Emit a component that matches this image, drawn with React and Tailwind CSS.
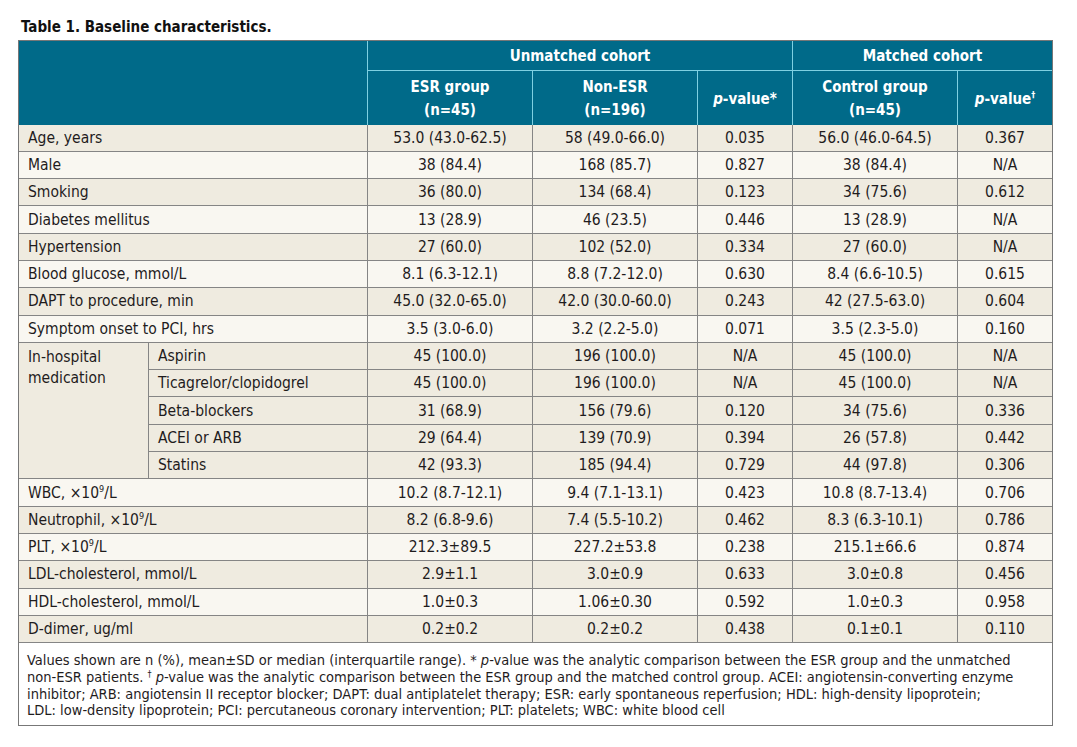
import React from "react";

const rowsA = [
  ["Age, years", "53.0 (43.0-62.5)", "58 (49.0-66.0)", "0.035", "56.0 (46.0-64.5)", "0.367"],
  ["Male", "38 (84.4)", "168 (85.7)", "0.827", "38 (84.4)", "N/A"],
  ["Smoking", "36 (80.0)", "134 (68.4)", "0.123", "34 (75.6)", "0.612"],
  ["Diabetes mellitus", "13 (28.9)", "46 (23.5)", "0.446", "13 (28.9)", "N/A"],
  ["Hypertension", "27 (60.0)", "102 (52.0)", "0.334", "27 (60.0)", "N/A"],
  ["Blood glucose, mmol/L", "8.1 (6.3-12.1)", "8.8 (7.2-12.0)", "0.630", "8.4 (6.6-10.5)", "0.615"],
  ["DAPT to procedure, min", "45.0 (32.0-65.0)", "42.0 (30.0-60.0)", "0.243", "42 (27.5-63.0)", "0.604"],
  ["Symptom onset to PCI, hrs", "3.5 (3.0-6.0)", "3.2 (2.2-5.0)", "0.071", "3.5 (2.3-5.0)", "0.160"],
];

const meds = [
  ["Aspirin", "45 (100.0)", "196 (100.0)", "N/A", "45 (100.0)", "N/A"],
  ["Ticagrelor/clopidogrel", "45 (100.0)", "196 (100.0)", "N/A", "45 (100.0)", "N/A"],
  ["Beta-blockers", "31 (68.9)", "156 (79.6)", "0.120", "34 (75.6)", "0.336"],
  ["ACEI or ARB", "29 (64.4)", "139 (70.9)", "0.394", "26 (57.8)", "0.442"],
  ["Statins", "42 (93.3)", "185 (94.4)", "0.729", "44 (97.8)", "0.306"],
];

const Sup9 = ({ pre }) => (
  <>
    {pre}, ×10<sup className="text-[9px] -top-[6px]">9</sup>/L
  </>
);

const rowsB = [
  [<Sup9 pre="WBC" />, "10.2 (8.7-12.1)", "9.4 (7.1-13.1)", "0.423", "10.8 (8.7-13.4)", "0.706"],
  [<Sup9 pre="Neutrophil" />, "8.2 (6.8-9.6)", "7.4 (5.5-10.2)", "0.462", "8.3 (6.3-10.1)", "0.786"],
  [<Sup9 pre="PLT" />, "212.3±89.5", "227.2±53.8", "0.238", "215.1±66.6", "0.874"],
  ["LDL-cholesterol, mmol/L", "2.9±1.1", "3.0±0.9", "0.633", "3.0±0.8", "0.456"],
  ["HDL-cholesterol, mmol/L", "1.0±0.3", "1.06±0.30", "0.592", "1.0±0.3", "0.958"],
  ["D-dimer, ug/ml", "0.2±0.2", "0.2±0.2", "0.438", "0.1±0.1", "0.110"],
];

const BEIGE = "bg-[#efebe0]";
const LIGHT = "bg-[#f9f7f1]";

function Cells({ vals }) {
  return vals.map((v, i) => (
    <td
      key={i}
      className={
        "h-[27.3px] p-0 text-center whitespace-nowrap border-b border-[#858585] " +
        (i === vals.length - 1 ? "" : "border-r ")
      }
    >
      {v}
    </td>
  ));
}

export default function App() {
  return (
    <div className="w-[1077px] h-[747px] bg-white pt-[15px] pl-[18px] font-['Liberation_Sans_Narrow','DejaVu_Sans_Condensed',sans-serif] text-[#1f1c1d]">
      <div className="pl-[3px] pt-[2px] h-[20px] leading-[20px] text-[15px] font-bold text-[#111]">
        Table 1. Baseline characteristics.
      </div>
      <div className="mt-[5px] w-[1035px] border border-[#777]">
        <table className="w-full table-fixed border-separate border-spacing-0 text-[15.5px] leading-[20px]">
          <colgroup>
            <col className="w-[130px]" />
            <col className="w-[219px]" />
            <col className="w-[165px]" />
            <col className="w-[165px]" />
            <col className="w-[95px]" />
            <col className="w-[165px]" />
            <col className="w-[94px]" />
          </colgroup>
          <thead className="text-white font-bold text-[15px] leading-[23px]">
            <tr>
              <th colSpan={2} rowSpan={2} className="bg-[#006a89] border-r border-[#7fd0e2] p-0"></th>
              <th colSpan={3} className="h-[30px] bg-[#006a89] border-r border-b border-[#7fd0e2] p-0 pt-[2px] font-bold">
                Unmatched cohort
              </th>
              <th colSpan={2} className="h-[30px] bg-[#006a89] border-b border-[#7fd0e2] p-0 pt-[2px] font-bold">
                Matched cohort
              </th>
            </tr>
            <tr>
              <th className="h-[53.5px] bg-[#006a89] border-r border-[#7fd0e2] p-0 pt-[3px] font-bold">
                ESR group
                <br />
                (n=45)
              </th>
              <th className="bg-[#006a89] border-r border-[#7fd0e2] p-0 pt-[3px] font-bold">
                Non-ESR
                <br />
                (n=196)
              </th>
              <th className="bg-[#006a89] border-r border-[#7fd0e2] p-0 pt-[3px] font-bold">
                <i>p</i>-value*
              </th>
              <th className="bg-[#006a89] border-r border-[#7fd0e2] p-0 pt-[3px] font-bold">
                Control group
                <br />
                (n=45)
              </th>
              <th className="bg-[#006a89] p-0 pt-[3px] font-bold">
                <i>p</i>-value<sup className="text-[9px] -top-[6px]">†</sup>
              </th>
            </tr>
          </thead>
          <tbody>
            {rowsA.map((r, idx) => (
              <tr key={"a" + idx} className={idx % 2 === 0 ? BEIGE : LIGHT}>
                <td colSpan={2} className="h-[27.3px] p-0 pl-[9px] whitespace-nowrap border-r border-b border-[#858585]">
                  {r[0]}
                </td>
                <Cells vals={r.slice(1)} />
              </tr>
            ))}
            {meds.map((r, idx) => (
              <tr key={"m" + idx} className={BEIGE}>
                {idx === 0 && (
                  <td
                    rowSpan={5}
                    className="p-0 pl-[9px] pt-[4px] align-top leading-[21px] border-r border-b border-[#858585]"
                  >
                    In-hospital
                    <br />
                    medication
                  </td>
                )}
                <td className="h-[27.3px] p-0 pl-[9px] whitespace-nowrap border-r border-b border-[#858585]">
                  {r[0]}
                </td>
                <Cells vals={r.slice(1)} />
              </tr>
            ))}
            {rowsB.map((r, idx) => (
              <tr key={"b" + idx} className={idx % 2 === 0 ? LIGHT : BEIGE}>
                <td colSpan={2} className="h-[27.3px] p-0 pl-[9px] whitespace-nowrap border-r border-b border-[#858585]">
                  {r[0]}
                </td>
                <Cells vals={r.slice(1)} />
              </tr>
            ))}
          </tbody>
        </table>
        <div className="px-[8px] pt-[9px] pb-[6px] text-[14.5px] leading-[16.7px] whitespace-nowrap">
          <div>
            Values shown are n (%), mean±SD or median (interquartile range). * <i>p</i>-value was the analytic comparison between the ESR group and the unmatched
          </div>
          <div>
            non-ESR patients. <sup className="text-[9px] -top-[5px]">†</sup> <i>p</i>-value was the analytic comparison between the ESR group and the matched control group. ACEI: angiotensin-converting enzyme
          </div>
          <div>
            inhibitor; ARB: angiotensin II receptor blocker; DAPT: dual antiplatelet therapy; ESR: early spontaneous reperfusion; HDL: high-density lipoprotein;
          </div>
          <div>LDL: low-density lipoprotein; PCI: percutaneous coronary intervention; PLT: platelets; WBC: white blood cell</div>
        </div>
      </div>
    </div>
  );
}
